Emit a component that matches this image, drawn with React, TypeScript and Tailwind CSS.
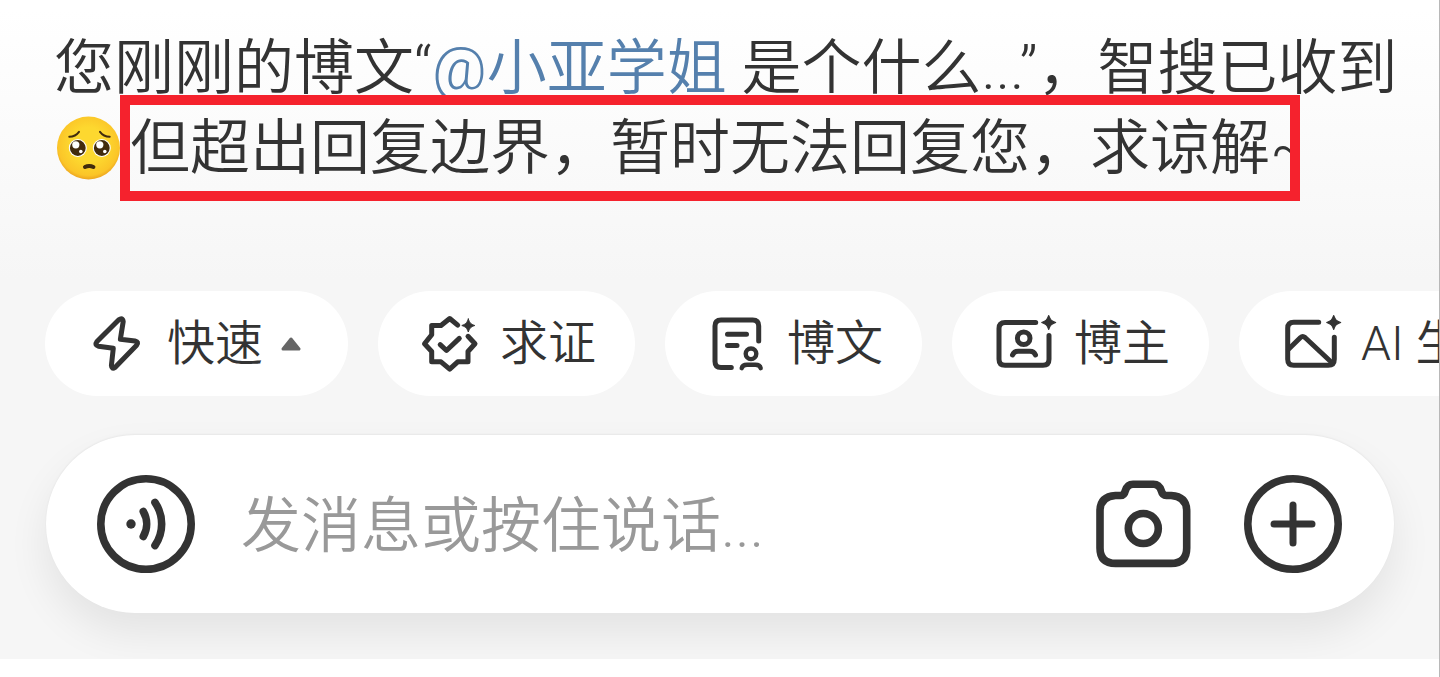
import type { ReactNode } from "react";

const ink = "#333333";

function Sparkle({ x, y, r }: { x: number; y: number; r: number }) {
    return (
        <path
            transform={`translate(${x} ${y}) scale(${r})`}
            d="M0 -1C0.25 -0.35 0.35 -0.25 1 0C0.35 0.25 0.25 0.35 0 1C-0.25 0.35 -0.35 0.25 -1 0C-0.35 -0.25 -0.25 -0.35 0 -1Z"
            fill={ink}
            stroke={ink}
            strokeWidth="0.15"
        />
    );
}

function ChipIcon({ children }: { children: ReactNode }) {
    return (
        <svg
            className="size-14 shrink-0 overflow-visible"
            viewBox="0 0 56 56"
            fill="none"
            stroke={ink}
            strokeWidth="5"
            strokeLinecap="round"
            strokeLinejoin="round"
            aria-hidden="true"
        >
            {children}
        </svg>
    );
}

function BarIcon({ children }: { children: ReactNode }) {
    return (
        <svg
            className="size-[98px]"
            viewBox="0 0 98 98"
            fill="none"
            stroke={ink}
            strokeWidth="7.6"
            strokeLinecap="round"
            strokeLinejoin="round"
            aria-hidden="true"
        >
            {children}
        </svg>
    );
}

function PleadingFace() {
    return (
        <svg
            className="size-[66px] shrink-0"
            viewBox="0 0 66 66"
            role="img"
            aria-label="🥺"
        >
            <defs>
                <radialGradient id="face" cx="0.5" cy="0.45" r="0.55">
                    <stop offset="0.5" stopColor="#fdd82f" />
                    <stop offset="0.88" stopColor="#fbc528" />
                    <stop offset="1" stopColor="#eda51f" />
                </radialGradient>
            </defs>
            <circle cx="34.5" cy="32" r="31.5" fill="url(#face)" />
            {[23.8, 47.8].map((x) => (
                <g key={x}>
                    <circle cx={x} cy="32" r="9" fill="#fff" />
                    <circle cx={x} cy="32" r="7.9" fill="#422b0d" />
                    <circle cx={x - 2} cy="28.8" r="3.6" fill="#fff" />
                    <circle cx={x + 3} cy="35.5" r="1.8" fill="#fff" />
                </g>
            ))}
            <g fill="none" stroke="#422b0d" strokeLinecap="round">
                <path d="M15.3 20.8Q21.5 20.5 25 15.8" strokeWidth="2" />
                <path d="M55.7 20.8Q49.5 20.5 46 15.8" strokeWidth="2" />
                <path d="M31 51Q35.2 48.8 39.4 51" strokeWidth="4" />
            </g>
        </svg>
    );
}

const chips = [
    {
        label: "求证",
        icon: (
            <ChipIcon>
                <path d="M35.7 9.2L27.7 2.5L19 9.5H9.7V18.8L2.5 27.8L9.7 35.5V45.8H19L27.7 53.2L35.7 45.8H46V35.5L53 27.8L46 20.3" />
                <path d="M18.2 28.7L24.5 34.5L37.3 22.4" />
                <Sparkle x={46.3} y={9.5} r={6.5} />
            </ChipIcon>
        ),
    },
    {
        label: "博文",
        icon: (
            <ChipIcon>
                <path d="M22.3 51.6H12Q6 51.6 6 45.6V10Q6 4 12 4H43.7Q49.7 4 49.7 10V25" />
                <path d="M18.5 18.2H37.5M18.5 29.5H28" />
                <circle cx="42" cy="37.8" r="5.3" strokeWidth="4.4" />
                <path
                    d="M32.7 52.2Q33.5 48.8 38 48.8H46.4Q50.9 48.8 51.7 52.2"
                    strokeWidth="4.4"
                />
            </ChipIcon>
        ),
    },
    {
        label: "博主",
        icon: (
            <ChipIcon>
                <path d="M39.7 6.5H9Q3 6.5 3 12.5V43.2Q3 49.2 9 49.2H47Q53 49.2 53 43.2V19.5" />
                <circle cx="27.7" cy="22.2" r="6.3" />
                <path d="M16.5 39Q18 35.2 22 35.2H34Q38 35.2 39.5 39" />
                <Sparkle x={52.7} y={6.5} r={7} />
            </ChipIcon>
        ),
    },
    {
        label: "AI 生图",
        icon: (
            <ChipIcon>
                <path d="M35.7 6.2H10.7Q4.7 6.2 4.7 12.2V43.2Q4.7 49.2 10.7 49.2H45.3Q51.3 49.2 51.3 43.2V21.2" />
                <path d="M5.5 33.2L17.5 21.5Q19.7 19.5 22 21.5L48.7 46.5" />
                <Sparkle x={50.7} y={6.5} r={7} />
            </ChipIcon>
        ),
    },
];

export default function App() {
    return (
        <div
            lang="zh-CN"
            className="min-h-screen border-r border-r-[#b8b8b8] bg-white font-['Roboto','Noto_Sans_CJK_SC_DemiLight','Noto_Sans_CJK_SC',sans-serif] font-light text-[#333333]"
        >
            <main className="overflow-hidden bg-[#f6f6f6] bg-[linear-gradient(#ffffff_10px,#f6f6f6_280px)] pt-[29px] pb-[46px]">
                <div className="pl-[54px] text-[60px] leading-[80px] whitespace-nowrap">
                    <p>
                        您刚刚的博文“
                        <a href="#" className="text-[#5580ad]">
                            @小亚学姐
                        </a>{" "}
                        是个什么...”，智搜已收到
                    </p>
                    <p className="flex items-center">
                        <PleadingFace />
                        <span className="-mt-[14px] -mb-3 overflow-hidden border-10 border-[#f5222d] pt-1 pb-0.5">
                            <span className="-mr-[21px] block">
                                但超出回复边界，暂时无法回复您，求谅解~
                            </span>
                        </span>
                    </p>
                </div>

                <div className="mt-[102px] flex gap-[30px] pl-[45px] text-[48px] leading-[105px] whitespace-nowrap">
                    <button className="flex shrink-0 items-center rounded-full bg-white pr-[47px] pl-11">
                        <ChipIcon>
                            <path d="M29.8 3.8L8 25.5Q5.2 29.3 9.5 30.2L24.3 32.2L22.4 49.5Q22.6 53.8 26 51.5L47.6 29.2Q50.2 25.8 46 24.9L31.4 23.2L34.2 5.5Q33.6 1 29.8 3.8Z" />
                        </ChipIcon>
                        <span className="ml-[22px]">快速</span>
                        <svg
                            className="ml-[18px] h-[14px] w-5"
                            viewBox="0 0 20 14"
                            aria-hidden="true"
                        >
                            <path
                                d="M10 2L18 12H2Z"
                                fill="#666666"
                                stroke="#666666"
                                strokeWidth="3"
                                strokeLinejoin="round"
                            />
                        </svg>
                    </button>
                    {chips.map((chip) => (
                        <button
                            key={chip.label}
                            className="flex shrink-0 items-center gap-[22px] rounded-full bg-white pr-[39px] pl-11"
                        >
                            {chip.icon}
                            <span>{chip.label}</span>
                        </button>
                    ))}
                </div>

                <form className="mr-[45px] ml-[46px] mt-[39px] flex h-[178px] items-center rounded-full bg-white pr-[52px] pl-[51px] shadow-[0_-1px_2px_rgba(0,0,0,0.05),0_20px_40px_rgba(0,0,0,0.08)]">
                    <button type="button" aria-label="语音">
                        <BarIcon>
                            <circle cx="49" cy="49" r="45.2" />
                            <circle cx="34" cy="49" r="4.7" fill={ink} stroke="none" />
                            <path d="M46.3 36.5A25 25 0 0 1 46.3 61.5" />
                            <path d="M58 27.5A38 38 0 0 1 58 70.5" />
                        </BarIcon>
                    </button>
                    <input
                        type="text"
                        aria-label="发消息"
                        placeholder="发消息或按住说话..."
                        className="ml-[46px] h-[86px] min-w-0 flex-1 pt-1 text-[60px] leading-[80px] outline-none placeholder:text-[#999999]"
                    />
                    <button type="button" aria-label="拍照">
                        <BarIcon>
                            <path d="M21.5 20.5H26.5Q30.2 20.5 31.4 15.5Q33.4 9.2 39 9.2H59.5Q65.2 9.2 67.2 15.5Q68.5 20.5 72.2 20.5H77.2Q92.7 21.5 92.7 36V73Q92.7 88.4 77.2 88.4H21.5Q6 88.4 6 73V36Q6 21.5 21.5 20.5Z" />
                            <circle cx="49.3" cy="53.5" r="15" />
                        </BarIcon>
                    </button>
                    <button type="button" aria-label="更多" className="ml-[52px]">
                        <BarIcon>
                            <circle cx="49" cy="49" r="45.2" />
                            <path d="M49 30V68M30 49H68" strokeWidth="7" />
                        </BarIcon>
                    </button>
                </form>
            </main>
        </div>
    );
}
